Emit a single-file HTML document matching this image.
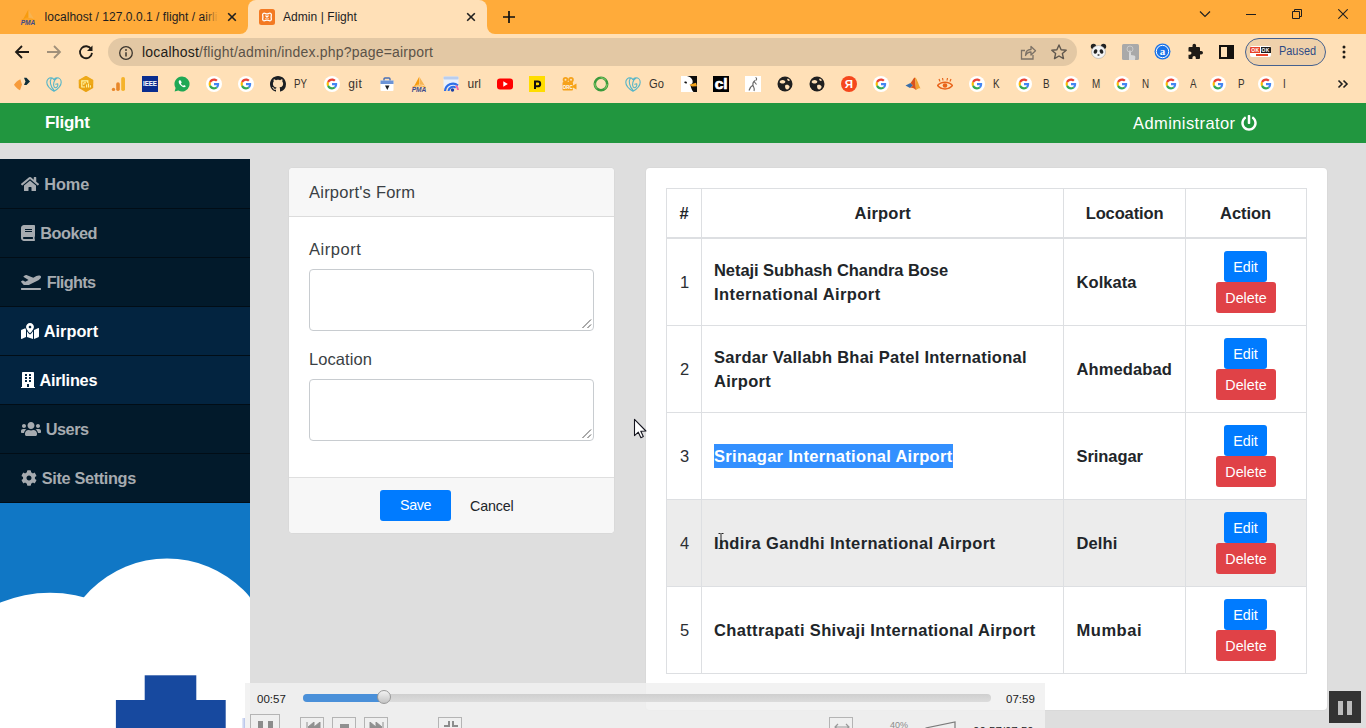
<!DOCTYPE html>
<html lang="en">
<head>
<meta charset="utf-8">
<title>Admin | Flight</title>
<style>
*{box-sizing:border-box;margin:0;padding:0}
html,body{width:1366px;height:728px;overflow:hidden}
body{position:relative;background:#dedede;font-family:"Liberation Sans",sans-serif;font-size:16px;color:#212529;line-height:1.5}
.abs{position:absolute}
/* ---------- browser chrome ---------- */
#tabstrip{position:absolute;left:0;top:0;width:1366px;height:34px;background:#ffab3a}
#toolbar{position:absolute;left:0;top:34px;width:1366px;height:34px;background:#ffe0b7}
#bookmarks{position:absolute;left:0;top:68px;width:1366px;height:35px;background:#ffe0b7}
.tabtxt{position:absolute;top:8px;font-size:12px;line-height:18px;color:#1d1d1f;white-space:nowrap;letter-spacing:0.06px}
#activetab{position:absolute;left:248px;top:0;width:239px;height:34px;background:#ffe0b7;border-radius:8px 8px 0 0}
#omni{position:absolute;left:108px;top:4px;width:969px;height:28px;border-radius:14px;background:#e3c8a4}
#url{position:absolute;left:34px;top:4px;font-size:14px;letter-spacing:0.2px;line-height:20px;color:#5b5348;white-space:nowrap}
#url b{font-weight:normal;color:#1f1c18}
.bm{position:absolute;top:8px;width:16px;height:16px}
.bmt{position:absolute;top:7px;font-size:12px;line-height:18px;color:#38332d;white-space:nowrap}
/* ---------- page ---------- */
#navbar{position:absolute;left:0;top:103px;width:1366px;height:40px;background:#21963f}
#brand{position:absolute;left:45px;top:8px;font-weight:bold;font-size:17px;line-height:24px;color:#fff;letter-spacing:0.15px}
#admin{position:absolute;left:1133px;top:8px;font-size:16.5px;line-height:24px;color:#fff;white-space:nowrap;letter-spacing:0.2px}
#sidebar{position:absolute;left:0;top:159px;width:250px;height:344px;background:#021a2b;overflow:hidden}
.sitem{position:absolute;left:0;width:250px;height:49px;border-bottom:1px solid #010d16;color:#a6abb0;font-weight:bold;font-size:16.3px;line-height:24px;white-space:nowrap}
.sitem.act{background:#032440;color:#fff}
.sitem span{position:absolute;top:12px}
.sitem svg{position:absolute;fill:currentColor}
#sideimg{position:absolute;left:0;top:503px;width:250px;height:225px;background:#1077c5;overflow:hidden}

/* cards */
.card{position:absolute;background:#fff;border-radius:4px;box-shadow:0 0 0 1px rgba(0,0,0,0.02)}
.card-h{position:absolute;left:0;top:0;right:0;height:49px;background:#f7f7f7;border-bottom:1px solid #dcdcdc;border-radius:4px 4px 0 0}
.card-f{position:absolute;left:0;bottom:0;right:0;height:56px;background:#f7f7f7;border-top:1px solid #dfdfdf;border-radius:0 0 4px 4px}
.lbl{position:absolute;left:19px;font-size:16px;line-height:24px;color:#3a3f44;white-space:nowrap}
.ta{position:absolute;width:285px;height:62px;border:1px solid #c8ccd0;border-radius:4px;background:#fff}
.ta svg{position:absolute;right:1px;bottom:1px}
.btn{position:absolute;height:31px;border-radius:3px;color:#fff;font-size:14px;line-height:31px;text-align:center;white-space:nowrap}
.b-blue{background:#007bff}
.b-red{background:#e04247}
/* table */
#tbl{position:absolute;left:20px;top:20px;width:640px;height:486px;border:1px solid #dddfe2}
.vl{position:absolute;top:0;width:1px;height:484px;background:#dddfe2}
.hl{position:absolute;left:0;width:638px;height:1px;background:#dddfe2}
.cell{position:absolute;white-space:nowrap;font-size:16px;line-height:24px;color:#212529}
.cell.b{font-weight:bold}

#vlc{position:absolute;left:245px;top:683px;width:800px;height:45px;background:rgba(240,240,240,0.86);overflow:hidden}
.vt{font-size:11.500px;line-height:16px;color:#1c1c1c;white-space:nowrap}
.vb{border:1px solid #b4b4b4;background:#efefef}
</style>
</head>
<body>
<div id="tabstrip">
<svg class="abs" style="left:20px;top:9px" width="16" height="16" viewBox="0 0 16 16"><path d="M8.300 0.500L3 10.500C5 9 7 8.500 8.300 8.800Z" fill="#f89c0e"/><path d="M8.800 1.500L14 10C12.500 8.800 10.500 8.500 8.800 8.800Z" fill="#f6b453"/><path d="M1 11.500C4 9.300 11 9.300 15 11.500" fill="none" stroke="#f89c0e" stroke-width="0.800"/><text x="8" y="15.600" font-family="Liberation Sans, sans-serif" font-size="6.600" font-weight="bold" font-style="italic" fill="#3c4a8a" text-anchor="middle">PMA</text></svg>
<div class="tabtxt" id="tab1" style="left:44.500px;width:173px;overflow:hidden;letter-spacing:0.04px">localhost / 127.0.0.1 / flight / airline<span class="abs" style="right:0;top:0;width:13px;height:18px;background:linear-gradient(90deg,rgba(255,171,58,0),#ffab3a)"></span></div>
<svg class="abs" style="left:226px;top:11px" width="12" height="12" viewBox="0 0 12 12"><path d="M2.2 2.2L9.8 9.8M9.8 2.2L2.2 9.8" stroke="#1f1f1f" stroke-width="1.6"/></svg>
<div class="abs" style="left:240px;top:26px;width:8px;height:8px;background:#ffe0b7"></div><div class="abs" style="left:240px;top:26px;width:8px;height:8px;border-radius:0 0 8px 0;background:#ffab3a"></div>
<div class="abs" style="left:487px;top:26px;width:8px;height:8px;background:#ffe0b7"></div><div class="abs" style="left:487px;top:26px;width:8px;height:8px;border-radius:0 0 0 8px;background:#ffab3a"></div>
<div id="activetab"></div>
<svg class="abs" style="left:259px;top:9px" width="16" height="16" viewBox="0 0 16 16"><rect width="16" height="16" rx="2.500" fill="#f37a23"/><path d="M4.200 4.500c1.300-.9 2.500.4 3.800.4s2.500-1.300 3.800-.4c1.200.9.300 2.300.3 3.500s.9 2.600-.3 3.500c-1.300.9-2.500-.4-3.800-.4s-2.500 1.300-3.800.4c-1.200-.9-.3-2.300-.3-3.500s-.9-2.600.3-3.500z" fill="none" stroke="#fff" stroke-width="1.300"/><path d="M6.500 6.500L9.500 9.500M9.500 6.500L6.500 9.500" stroke="#fff" stroke-width="1.200"/></svg>
<div class="tabtxt" id="tab2" style="left:283px">Admin | Flight</div>
<svg class="abs" style="left:465px;top:11px" width="12" height="12" viewBox="0 0 12 12"><path d="M2.2 2.2L9.8 9.8M9.8 2.2L2.2 9.8" stroke="#1f1f1f" stroke-width="1.6"/></svg>
<svg class="abs" style="left:502px;top:10px" width="14" height="14" viewBox="0 0 14 14"><path d="M7 1V13M1 7H13" stroke="#111" stroke-width="1.700"/></svg>
<svg class="abs" style="left:1199px;top:10px" width="12" height="8" viewBox="0 0 12 8"><path d="M1 1.500L6 6.500L11 1.500" fill="none" stroke="#1f1f1f" stroke-width="1.200"/></svg>
<div class="abs" style="left:1246px;top:14px;width:10px;height:1px;background:#1f1f1f"></div>
<svg class="abs" style="left:1292px;top:9px" width="10" height="10" viewBox="0 0 10 10"><path d="M0.500 2.500h7v7h-7zM2.500 2.500V0.500h7v7H7.500" fill="none" stroke="#1f1f1f" stroke-width="1"/></svg>
<svg class="abs" style="left:1338px;top:9px" width="10" height="10" viewBox="0 0 10 10"><path d="M0.300 0.300L9.700 9.700M9.700 0.300L0.300 9.700" stroke="#1f1f1f" stroke-width="1.100"/></svg>
</div>
<div id="toolbar">
<svg class="abs" style="left:14px;top:10px" width="16" height="16" viewBox="0 0 16 16"><path d="M15 8H2.500M8 2L2 8L8 14" fill="none" stroke="#1f1b16" stroke-width="1.800"/></svg>
<svg class="abs" style="left:46px;top:10px" width="16" height="16" viewBox="0 0 16 16"><path d="M1 8H13.500M8 2L14 8L8 14" fill="none" stroke="#a0907a" stroke-width="1.800"/></svg>
<svg class="abs" style="left:78px;top:10px" width="16" height="16" viewBox="0 0 16 16"><path d="M13.200 5.200A6 6 0 1 0 14 8.800" fill="none" stroke="#1f1b16" stroke-width="1.800"/><path d="M14.500 1.500V7H9Z" fill="#1f1b16"/></svg>
<div id="omni">
<svg class="abs" style="left:9.700px;top:6.500px" width="16" height="16" viewBox="0 0 16 16"><circle cx="8" cy="8" r="6.300" fill="none" stroke="#3b352d" stroke-width="1.300"/><path d="M8 7.200V11.500" stroke="#3b352d" stroke-width="1.500"/><circle cx="8" cy="5" r=".95" fill="#3b352d"/></svg>
<div id="url"><b>localhost</b>/flight/admin/index.php?page=airport</div>
<svg class="abs" style="left:911px;top:5px" width="18" height="18" viewBox="0 0 18 18"><path d="M6 7.500H2.500V16H14V12" fill="none" stroke="#7c7266" stroke-width="1.300"/><path d="M6.500 12.500C6.500 8.500 9 6.500 12 6.500V3.500L16.500 7.800L12 12V9C10 9 8 9.500 6.500 12.500Z" fill="none" stroke="#7c7266" stroke-width="1.300" stroke-linejoin="round"/></svg>
<svg class="abs" style="left:942px;top:5px" width="18" height="18" viewBox="0 0 18 18"><path d="M9 2l2.100 4.700 5.100.5-3.800 3.400 1.100 5L9 13l-4.500 2.600 1.100-5L1.800 7.200l5.100-.5z" fill="none" stroke="#5f574d" stroke-width="1.400" stroke-linejoin="round"/></svg>
</div>
<svg class="abs" style="left:1090px;top:9px" width="17" height="17" viewBox="0 0 17 17"><circle cx="3.500" cy="3.500" r="2.700" fill="#222"/><circle cx="13.500" cy="3.500" r="2.700" fill="#222"/><ellipse cx="8.500" cy="9" rx="7" ry="6.500" fill="#f4f4f4" stroke="#999" stroke-width=".5"/><ellipse cx="5.500" cy="8.500" rx="1.800" ry="2.300" fill="#222" transform="rotate(20 5.500 8.500)"/><ellipse cx="11.500" cy="8.500" rx="1.800" ry="2.300" fill="#222" transform="rotate(-20 11.500 8.500)"/><ellipse cx="8.500" cy="12" rx="1.200" ry=".8" fill="#222"/></svg>
<svg class="abs" style="left:1122px;top:10px" width="17" height="16" viewBox="0 0 17 16"><rect width="17" height="16" rx="1.500" fill="#a9a9a9"/><path d="M7 16V7.500c0-1.500 2-1.500 2 0V11l3 .5c1 .2 1.500 1 1.300 2L13 16Z" fill="#d9d9d9"/><circle cx="8" cy="5" r="3" fill="none" stroke="#c9c9c9" stroke-width="1"/></svg>
<svg class="abs" style="left:1154px;top:9px" width="17" height="17" viewBox="0 0 17 17"><circle cx="8.500" cy="8.500" r="8" fill="#1a73e8"/><circle cx="8.500" cy="8.500" r="6.200" fill="none" stroke="#fff" stroke-width="1"/><text x="8.500" y="12.300" font-family="Liberation Serif, serif" font-size="11" font-weight="bold" fill="#fff" text-anchor="middle">a</text></svg>
<svg class="abs" style="left:1186px;top:9px" width="17" height="17" viewBox="0 0 17 17"><path d="M6.500 2.500a1.800 1.800 0 0 1 3.600 0V4H13a1 1 0 0 1 1 1v3h1.200a1.800 1.800 0 0 1 0 3.600H14V15a1 1 0 0 1-1 1H9.800v-1.300a1.700 1.700 0 0 0-3.400 0V16H3.500a1 1 0 0 1-1-1v-3.200h1.300a1.700 1.700 0 0 0 0-3.400H2.500V5a1 1 0 0 1 1-1h3z" fill="#1f1b16"/></svg>
<svg class="abs" style="left:1219px;top:11px" width="15" height="14" viewBox="0 0 15 14"><rect x="1" y="1" width="13" height="12" fill="none" stroke="#14110e" stroke-width="2"/><rect x="8" y="1" width="6" height="12" fill="#14110e"/></svg>
<div class="abs" style="left:1245px;top:4px;width:81px;height:28px;border-radius:14px;border:1px solid #44608f;background:#efd1ab"></div>
<div class="abs" style="left:1250px;top:12px;width:21px;height:11px;background:#fff;border-radius:2px;overflow:hidden"><span class="abs" style="left:0;top:1px;width:10px;height:6px;background:#e8432a"></span><span class="abs" style="left:11px;top:1px;width:10px;height:6px;background:#1b1b1b"></span><span class="abs" style="left:6px;top:8px;width:12px;height:2px;background:#e8432a"></span><span class="abs" style="left:0;top:0;width:21px;font-size:5px;line-height:8px;font-weight:bold;color:#fff;letter-spacing:.4px;text-align:center">OK OK</span></div>
<div class="abs" id="paused" style="left:1278.7px;top:8px;font-size:12px;line-height:18px;color:#2d4a85;transform:scaleX(.91);transform-origin:0 50%">Paused</div>
<svg class="abs" style="left:1340px;top:10px" width="8" height="16" viewBox="0 0 8 16"><circle cx="4" cy="3" r="1.500" fill="#1f1b16"/><circle cx="4" cy="8" r="1.500" fill="#1f1b16"/><circle cx="4" cy="13" r="1.500" fill="#1f1b16"/></svg>
</div>
<div id="bookmarks">
<svg class="bm" style="left:14px" viewBox="0 0 16 16"><path d="M0 8.7C1.5 6.5 4 4.2 6.3 3.2L8 8.5L6 14.2C3.5 13 1.2 10.8 0 8.700Z" fill="#f79b3a"/><path d="M10 1.7H12.5L16 5.5L12.5 9H10L11.5 5.500Z" fill="#0f2f3a"/></svg>
<svg class="bm" style="left:46px" viewBox="0 0 16 16"><path d="M8 15.2C3 12.3 0.800 9.300 0.800 6.200C0.800 3.600 2.700 1.800 5 1.800C6.500 1.800 7.500 2.700 8 3.800C8.500 2.700 9.500 1.800 11 1.800C13.300 1.800 15.200 3.600 15.200 6.200C15.200 9.300 13 12.300 8 15.200Z M5.300 2.200C3.400 5 4.300 10.500 8 14.200 M10.700 2.200C8 3.800 6.700 8 8.300 11.200C10 12.600 12.300 10.800 11.800 7.800L9.700 8.200" fill="none" stroke="#55b5c8" stroke-width="1.100" stroke-linecap="round" stroke-linejoin="round"/></svg>
<svg class="bm" style="left:78px" viewBox="0 0 16 16"><path d="M8 -0.2L15.2 3.900V12.100L8 16.200L0.800 12.100V3.900Z" fill="#eaa212"/><path d="M8 -0.2L15.2 3.900V8L0.800 8V3.900Z" fill="#f0ad1c" opacity=".6"/><path d="M9.8 7V4.800H3.800V11H7" fill="none" stroke="#fff3a0" stroke-width="1.200"/><path d="M5.800 9V6.800H8" fill="none" stroke="#fff3a0" stroke-width="1"/><path d="M8.600 11.600V8.600M10.500 11.600V7.600M12.400 11.600V9.300" stroke="#fff3a0" stroke-width="1.100"/></svg>
<svg class="bm" style="left:110px" viewBox="0 0 16 16"><rect x="11.200" y="1" width="3.800" height="14" rx="1.800" fill="#f5b32a"/><rect x="6.200" y="6.300" width="3.600" height="8.700" rx="1.800" fill="#e8872a"/><circle cx="3.500" cy="13.400" r="1.700" fill="#e8872a"/></svg>
<svg class="bm" style="left:142px" viewBox="0 0 16 16"><rect width="16" height="16" fill="#0a2d8f"/><text x="8" y="10.400" font-family="Liberation Sans, sans-serif" font-size="6.300" font-weight="bold" fill="#fff" text-anchor="middle" letter-spacing="-0.100">IEEE</text></svg>
<svg class="bm" style="left:174px" viewBox="0 0 16 16"><path d="M8 0.500a7.500 7.500 0 0 0-6.400 11.400L0.600 15.500l3.700-1A7.500 7.500 0 1 0 8 0.500z" fill="#1fa855"/><path d="M5.600 4.300c-.3 0-.9.500-.9 1.500 0 2 2.700 5 5.300 5.400.900.100 1.700-.500 1.800-1.200l-1.700-1-.8.800c-1-.400-2-1.400-2.400-2.400l.8-.8-.9-2.100z" fill="#fff"/></svg>
<svg class="bm" style="left:206px" viewBox="0 0 16 16"><circle cx="8" cy="8" r="8" fill="#fff"/><g transform="translate(2.6 2.6) scale(0.225)"><path fill="#EA4335" d="M24 9.5c3.54 0 6.71 1.22 9.21 3.6l6.85-6.85C35.9 2.38 30.47 0 24 0 14.62 0 6.51 5.38 2.56 13.22l7.98 6.19C12.43 13.72 17.74 9.5 24 9.5z"/><path fill="#4285F4" d="M46.98 24.55c0-1.57-.15-3.09-.38-4.55H24v9.02h12.94c-.58 2.96-2.26 5.48-4.78 7.18l7.73 6c4.51-4.18 7.09-10.36 7.09-17.65z"/><path fill="#FBBC05" d="M10.53 28.59c-.48-1.45-.76-2.99-.76-4.59s.27-3.14.76-4.59l-7.98-6.19C.92 16.46 0 20.12 0 24c0 3.88.92 7.54 2.56 10.78l7.97-6.19z"/><path fill="#34A853" d="M24 48c6.48 0 11.93-2.13 16.15-5.81l-7.73-6c-2.15 1.45-4.92 2.3-8.42 2.3-6.26 0-11.57-4.22-13.47-9.91l-7.98 6.19C6.51 42.62 14.62 48 24 48z"/></g></svg>
<svg class="bm" style="left:238px" viewBox="0 0 16 16"><circle cx="8" cy="8" r="8" fill="#fff"/><g transform="translate(2.6 2.6) scale(0.225)"><path fill="#EA4335" d="M24 9.5c3.54 0 6.71 1.22 9.21 3.6l6.85-6.85C35.9 2.38 30.47 0 24 0 14.62 0 6.51 5.38 2.56 13.22l7.98 6.19C12.43 13.72 17.74 9.5 24 9.5z"/><path fill="#4285F4" d="M46.98 24.55c0-1.57-.15-3.09-.38-4.55H24v9.02h12.94c-.58 2.96-2.26 5.48-4.78 7.18l7.73 6c4.51-4.18 7.09-10.36 7.09-17.65z"/><path fill="#FBBC05" d="M10.53 28.59c-.48-1.45-.76-2.99-.76-4.59s.27-3.14.76-4.59l-7.98-6.19C.92 16.46 0 20.12 0 24c0 3.88.92 7.54 2.56 10.78l7.97-6.19z"/><path fill="#34A853" d="M24 48c6.48 0 11.93-2.13 16.15-5.81l-7.73-6c-2.15 1.45-4.92 2.3-8.42 2.3-6.26 0-11.57-4.22-13.47-9.91l-7.98 6.19C6.51 42.62 14.62 48 24 48z"/></g></svg>
<svg class="bm" style="left:270px" viewBox="0 0 16 16"><path fill="#1b1f23" d="M8 0C3.580 0 0 3.580 0 8c0 3.540 2.290 6.530 5.470 7.590.4.070.55-.17.55-.38 0-.19-.01-.82-.01-1.490-2.010.37-2.530-.49-2.690-.94-.09-.23-.48-.94-.82-1.130-.28-.15-.68-.52-.01-.53.63-.01 1.080.58 1.230.82.72 1.210 1.870.87 2.330.66.070-.52.280-.87.510-1.070-1.780-.2-3.640-.89-3.640-3.950 0-.87.310-1.590.82-2.150-.08-.2-.36-1.020.08-2.120 0 0 .67-.21 2.200.82.640-.18 1.320-.27 2-.27.680 0 1.360.09 2 .27 1.530-1.040 2.200-.82 2.200-.82.440 1.100.16 1.920.08 2.120.51.560.82 1.270.82 2.150 0 3.070-1.870 3.750-3.650 3.950.29.250.54.730.54 1.480 0 1.070-.01 1.930-.01 2.200 0 .21.15.46.55.38A8.013 8.013 0 0016 8c0-4.420-3.580-8-8-8z"/></svg>
<span class="bmt" style="left:294.4px;transform:scaleX(.81);transform-origin:0 50%">PY</span>
<svg class="bm" style="left:324px" viewBox="0 0 16 16"><circle cx="8" cy="8" r="8" fill="#fff"/><g transform="translate(2.6 2.6) scale(0.225)"><path fill="#EA4335" d="M24 9.5c3.54 0 6.71 1.22 9.21 3.6l6.85-6.85C35.9 2.38 30.47 0 24 0 14.62 0 6.51 5.38 2.56 13.22l7.98 6.19C12.43 13.72 17.74 9.5 24 9.5z"/><path fill="#4285F4" d="M46.98 24.55c0-1.57-.15-3.09-.38-4.55H24v9.02h12.94c-.58 2.96-2.26 5.48-4.78 7.18l7.73 6c4.51-4.18 7.09-10.36 7.09-17.65z"/><path fill="#FBBC05" d="M10.53 28.59c-.48-1.45-.76-2.99-.76-4.59s.27-3.14.76-4.59l-7.98-6.19C.92 16.46 0 20.12 0 24c0 3.88.92 7.54 2.56 10.78l7.97-6.19z"/><path fill="#34A853" d="M24 48c6.48 0 11.93-2.13 16.15-5.81l-7.73-6c-2.15 1.45-4.92 2.3-8.42 2.3-6.26 0-11.57-4.22-13.47-9.91l-7.98 6.19C6.51 42.62 14.62 48 24 48z"/></g></svg>
<span class="bmt" style="left:348.2px;letter-spacing:.5px">git</span>
<svg class="bm" style="left:379px" viewBox="0 0 16 16"><rect x="1.500" y="4.500" width="13" height="10.500" rx="1" fill="#fff"/><path d="M5 4.500V3a1 1 0 0 1 1-1h4a1 1 0 0 1 1 1v1.500" fill="none" stroke="#4a6fb5" stroke-width="1.400"/><rect x="1.500" y="4.500" width="13" height="3.500" fill="#6b93d6"/><path d="M6 9.500h4.500l-2.200 4.500z" fill="#1b1f23"/></svg>
<svg class="bm" style="left:411px" viewBox="0 0 16 16"><path d="M8.300 0.500L3 10.500C5 9 7 8.500 8.300 8.800Z" fill="#f89c0e"/><path d="M8.800 1.500L14 10C12.500 8.800 10.500 8.500 8.800 8.800Z" fill="#f6b453"/><path d="M1 11.500C4 9.300 11 9.300 15 11.500" fill="none" stroke="#f89c0e" stroke-width="0.800"/><text x="8" y="15.600" font-family="Liberation Sans, sans-serif" font-size="6.600" font-weight="bold" font-style="italic" fill="#3c4a8a" text-anchor="middle">PMA</text></svg>
<svg class="bm" style="left:443px" viewBox="0 0 16 16"><rect x="0.500" y="0.500" width="15" height="12" rx="1" fill="#eaf1fb"/><rect x="0.500" y="0.500" width="15" height="3" rx="1" fill="#b9cdee"/><path d="M2 15a8 8 0 0 1 13-5.500" fill="none" stroke="#2f6fe8" stroke-width="2.200"/><path d="M5.500 15a4.500 4.500 0 0 1 7.200-3.200" fill="none" stroke="#2f6fe8" stroke-width="2"/><circle cx="9.500" cy="14" r="1.700" fill="#1d3fa6"/><path d="M13 9.500a8 8 0 0 1 2 4.500" stroke="#f06aa0" stroke-width="2" fill="none"/></svg>
<span class="bmt" style="left:467.500px">url</span>
<svg class="bm" style="left:497px" viewBox="0 0 16 16"><rect x="0" y="2.500" width="16" height="11" rx="3" fill="#f00"/><path d="M6.300 5.300L10.800 8L6.300 10.700Z" fill="#fff"/></svg>
<svg class="bm" style="left:529px" viewBox="0 0 16 16"><rect width="16" height="16" fill="#ffdd00"/><path d="M6 13V5.500h2.800a2.400 2.400 0 0 1 0 4.800H6" fill="none" stroke="#111" stroke-width="2"/></svg>
<svg class="bm" style="left:561px" viewBox="0 0 16 16"><circle cx="4.500" cy="3.800" r="2.800" fill="#f6a21a"/><circle cx="10" cy="3.800" r="2.800" fill="#f6a21a"/><rect x="1.500" y="6" width="10.500" height="8.500" rx="1" fill="#f6a21a"/><path d="M12 9.500L15.500 7.500V13.500L12 11.500Z" fill="#f6a21a"/><circle cx="4.500" cy="3.800" r="1" fill="#ffe0b7"/><circle cx="10" cy="3.800" r="1" fill="#ffe0b7"/><text x="6.800" y="13" font-family="Liberation Sans, sans-serif" font-size="4.500" font-weight="bold" fill="#fff" text-anchor="middle">ORC</text></svg>
<svg class="bm" style="left:593px" viewBox="0 0 16 16"><circle cx="8" cy="8" r="6.200" fill="none" stroke="#3a9a3c" stroke-width="2.600"/><circle cx="8" cy="8" r="6.200" fill="none" stroke="#8fce6a" stroke-width="1" stroke-dasharray="6 8"/></svg>
<svg class="bm" style="left:625px" viewBox="0 0 16 16"><path d="M8 15.2C3 12.3 0.800 9.300 0.800 6.200C0.800 3.600 2.700 1.800 5 1.800C6.500 1.800 7.500 2.700 8 3.800C8.500 2.700 9.500 1.800 11 1.800C13.300 1.800 15.200 3.600 15.200 6.200C15.200 9.300 13 12.300 8 15.200Z M5.300 2.200C3.400 5 4.300 10.500 8 14.200 M10.700 2.200C8 3.800 6.700 8 8.300 11.200C10 12.600 12.300 10.800 11.800 7.800L9.700 8.200" fill="none" stroke="#55b5c8" stroke-width="1.100" stroke-linecap="round" stroke-linejoin="round"/></svg>
<span class="bmt" style="left:649.4px;transform:scaleX(.93);transform-origin:0 50%">Go</span>
<svg class="bm" style="left:681px" viewBox="0 0 16 16"><rect width="16" height="16" fill="#0c0c0c"/><path d="M0 0H6C10 1 12.500 4 11.500 7L9.500 9C10 12 11 14.500 12.500 16H0Z" fill="#fff"/><path d="M8.300 8.800L15 6.800L16 10.200L11 10.400Z" fill="#f2a21c"/><ellipse cx="4.600" cy="6.400" rx="1.400" ry=".9" fill="#111" transform="rotate(20 4.600 6.400)"/></svg>
<svg class="bm" style="left:713px" viewBox="0 0 16 16"><rect width="16" height="16" fill="#000"/><text x="8" y="13.400" font-family="Liberation Sans, sans-serif" font-size="15.500" font-weight="bold" fill="#fff" stroke="#fff" stroke-width=".700" text-anchor="middle" letter-spacing="-0.300">cl</text></svg>
<svg class="bm" style="left:745px" viewBox="0 0 16 16"><rect width="16" height="16" fill="#fff"/><path d="M10.500 1.500c1.500.5 1.500 2.500 0 3M10 4.500c-1.500 1-2.500 3-2 5s2 2.500 1 5.500M8 9c-2 1-3 3-4 5.500M9.500 6l2 2.500" fill="none" stroke="#666" stroke-width="1.100"/></svg>
<svg class="bm" style="left:777px" viewBox="0 0 16 16"><circle cx="8" cy="8" r="7.500" fill="#1f1f1f"/><path d="M3.500 4.500c2-1 3.500-.5 4.500.5s-.5 2.500-2 2.500-3-.5-3.500-1.500zM8.500 9c1.500-.800 3.500 0 4 1.200s-1 3.300-2.500 3.300-2.500-3-1.500-4.500zM10 3c1-.5 2.500.300 3 1.500l-2 .5z" fill="#ffe0b7"/></svg>
<svg class="bm" style="left:809px" viewBox="0 0 16 16"><circle cx="8" cy="8" r="7.500" fill="#1f1f1f"/><path d="M3.500 4.500c2-1 3.500-.5 4.500.5s-.5 2.500-2 2.500-3-.5-3.500-1.500zM8.500 9c1.500-.800 3.500 0 4 1.200s-1 3.300-2.500 3.300-2.500-3-1.500-4.500zM10 3c1-.5 2.500.300 3 1.500l-2 .5z" fill="#ffe0b7"/></svg>
<svg class="bm" style="left:841px" viewBox="0 0 16 16"><circle cx="8" cy="8" r="8" fill="#f5471d"/><text x="8" y="12.300" font-family="Liberation Sans, sans-serif" font-size="11.500" font-weight="bold" fill="#fff" text-anchor="middle">Я</text></svg>
<svg class="bm" style="left:873px" viewBox="0 0 16 16"><circle cx="8" cy="8" r="8" fill="#fff"/><g transform="translate(2.6 2.6) scale(0.225)"><path fill="#EA4335" d="M24 9.5c3.54 0 6.71 1.22 9.21 3.6l6.85-6.85C35.9 2.38 30.47 0 24 0 14.62 0 6.51 5.38 2.56 13.22l7.98 6.19C12.43 13.72 17.74 9.5 24 9.5z"/><path fill="#4285F4" d="M46.98 24.55c0-1.57-.15-3.09-.38-4.55H24v9.02h12.94c-.58 2.96-2.26 5.48-4.78 7.18l7.73 6c4.51-4.18 7.09-10.36 7.09-17.65z"/><path fill="#FBBC05" d="M10.53 28.59c-.48-1.45-.76-2.99-.76-4.59s.27-3.14.76-4.59l-7.98-6.19C.92 16.46 0 20.12 0 24c0 3.88.92 7.54 2.56 10.78l7.97-6.19z"/><path fill="#34A853" d="M24 48c6.48 0 11.93-2.13 16.15-5.81l-7.73-6c-2.15 1.45-4.92 2.3-8.42 2.3-6.26 0-11.57-4.22-13.47-9.91l-7.98 6.19C6.51 42.62 14.62 48 24 48z"/></g></svg>
<svg class="bm" style="left:905px" viewBox="0 0 16 16"><path d="M0.500 9.500L5.500 7L8 9.500L5 12Z" fill="#3a6ea8"/><path d="M5.500 7C7.500 5 8.500 1.500 10 1.500L11 14C9.500 13 8 11 5 12L8 9.500Z" fill="#d9541e"/><path d="M10 1.500C11.500 1.500 13 7 15.500 12.500C13.500 11.500 12.500 13 11 14Z" fill="#f0a030"/></svg>
<svg class="bm" style="left:937px" viewBox="0 0 16 16"><path d="M0.500 9.500C4 5 12 5 15.500 9.500C12 14 4 14 0.500 9.500Z" fill="none" stroke="#e8641b" stroke-width="1.500"/><circle cx="8" cy="9.500" r="2.300" fill="#e8641b"/><path d="M3 5.500L2 3M6 4.500L5.500 2M10 4.500L10.500 2M13 5.500L14 3" stroke="#e8641b" stroke-width="1.200"/></svg>
<svg class="bm" style="left:969px" viewBox="0 0 16 16"><circle cx="8" cy="8" r="8" fill="#fff"/><g transform="translate(2.6 2.6) scale(0.225)"><path fill="#EA4335" d="M24 9.5c3.54 0 6.71 1.22 9.21 3.6l6.85-6.85C35.9 2.38 30.47 0 24 0 14.62 0 6.51 5.38 2.56 13.22l7.98 6.19C12.43 13.72 17.74 9.5 24 9.5z"/><path fill="#4285F4" d="M46.98 24.55c0-1.57-.15-3.09-.38-4.55H24v9.02h12.94c-.58 2.96-2.26 5.48-4.78 7.18l7.73 6c4.51-4.18 7.09-10.36 7.09-17.65z"/><path fill="#FBBC05" d="M10.53 28.59c-.48-1.45-.76-2.99-.76-4.59s.27-3.14.76-4.59l-7.98-6.19C.92 16.46 0 20.12 0 24c0 3.88.92 7.54 2.56 10.78l7.97-6.19z"/><path fill="#34A853" d="M24 48c6.48 0 11.93-2.13 16.15-5.81l-7.73-6c-2.15 1.45-4.92 2.3-8.42 2.3-6.26 0-11.57-4.22-13.47-9.91l-7.98 6.19C6.51 42.62 14.62 48 24 48z"/></g></svg>
<span class="bmt" style="left:993.4px;transform:scaleX(.82);transform-origin:0 50%">K</span>
<svg class="bm" style="left:1016px" viewBox="0 0 16 16"><circle cx="8" cy="8" r="8" fill="#fff"/><g transform="translate(2.6 2.6) scale(0.225)"><path fill="#EA4335" d="M24 9.5c3.54 0 6.71 1.22 9.21 3.6l6.85-6.85C35.9 2.38 30.47 0 24 0 14.62 0 6.51 5.38 2.56 13.22l7.98 6.19C12.43 13.72 17.74 9.5 24 9.5z"/><path fill="#4285F4" d="M46.98 24.55c0-1.57-.15-3.09-.38-4.55H24v9.02h12.94c-.58 2.96-2.26 5.48-4.78 7.18l7.73 6c4.51-4.18 7.09-10.36 7.09-17.65z"/><path fill="#FBBC05" d="M10.53 28.59c-.48-1.45-.76-2.99-.76-4.59s.27-3.14.76-4.59l-7.98-6.19C.92 16.46 0 20.12 0 24c0 3.88.92 7.54 2.56 10.78l7.97-6.19z"/><path fill="#34A853" d="M24 48c6.48 0 11.93-2.13 16.15-5.81l-7.73-6c-2.15 1.45-4.92 2.3-8.42 2.3-6.26 0-11.57-4.22-13.47-9.91l-7.98 6.19C6.51 42.62 14.62 48 24 48z"/></g></svg>
<span class="bmt" style="left:1043.4px;transform:scaleX(.82);transform-origin:0 50%">B</span>
<svg class="bm" style="left:1063px" viewBox="0 0 16 16"><circle cx="8" cy="8" r="8" fill="#fff"/><g transform="translate(2.6 2.6) scale(0.225)"><path fill="#EA4335" d="M24 9.5c3.54 0 6.71 1.22 9.21 3.6l6.85-6.85C35.9 2.38 30.47 0 24 0 14.62 0 6.51 5.38 2.56 13.22l7.98 6.19C12.43 13.72 17.74 9.5 24 9.5z"/><path fill="#4285F4" d="M46.98 24.55c0-1.57-.15-3.09-.38-4.55H24v9.02h12.94c-.58 2.96-2.26 5.48-4.78 7.18l7.73 6c4.51-4.18 7.09-10.36 7.09-17.65z"/><path fill="#FBBC05" d="M10.53 28.59c-.48-1.45-.76-2.99-.76-4.59s.27-3.14.76-4.59l-7.98-6.19C.92 16.46 0 20.12 0 24c0 3.88.92 7.54 2.56 10.78l7.97-6.19z"/><path fill="#34A853" d="M24 48c6.48 0 11.93-2.13 16.15-5.81l-7.73-6c-2.15 1.45-4.92 2.3-8.42 2.3-6.26 0-11.57-4.22-13.47-9.91l-7.98 6.19C6.51 42.62 14.62 48 24 48z"/></g></svg>
<span class="bmt" style="left:1092.4px;transform:scaleX(.82);transform-origin:0 50%">M</span>
<svg class="bm" style="left:1114px" viewBox="0 0 16 16"><circle cx="8" cy="8" r="8" fill="#fff"/><g transform="translate(2.6 2.6) scale(0.225)"><path fill="#EA4335" d="M24 9.5c3.54 0 6.71 1.22 9.21 3.6l6.85-6.85C35.9 2.38 30.47 0 24 0 14.62 0 6.51 5.38 2.56 13.22l7.98 6.19C12.43 13.72 17.74 9.5 24 9.5z"/><path fill="#4285F4" d="M46.98 24.55c0-1.57-.15-3.09-.38-4.55H24v9.02h12.94c-.58 2.96-2.26 5.48-4.78 7.18l7.73 6c4.51-4.18 7.09-10.36 7.09-17.65z"/><path fill="#FBBC05" d="M10.53 28.59c-.48-1.45-.76-2.99-.76-4.59s.27-3.14.76-4.59l-7.98-6.19C.92 16.46 0 20.12 0 24c0 3.88.92 7.54 2.56 10.78l7.97-6.19z"/><path fill="#34A853" d="M24 48c6.48 0 11.93-2.13 16.15-5.81l-7.73-6c-2.15 1.45-4.92 2.3-8.42 2.3-6.26 0-11.57-4.22-13.47-9.91l-7.98 6.19C6.51 42.62 14.62 48 24 48z"/></g></svg>
<span class="bmt" style="left:1142.4px;transform:scaleX(.82);transform-origin:0 50%">N</span>
<svg class="bm" style="left:1163px" viewBox="0 0 16 16"><circle cx="8" cy="8" r="8" fill="#fff"/><g transform="translate(2.6 2.6) scale(0.225)"><path fill="#EA4335" d="M24 9.5c3.54 0 6.71 1.22 9.21 3.6l6.85-6.85C35.9 2.38 30.47 0 24 0 14.62 0 6.51 5.38 2.56 13.22l7.98 6.19C12.43 13.72 17.74 9.5 24 9.5z"/><path fill="#4285F4" d="M46.98 24.55c0-1.57-.15-3.09-.38-4.55H24v9.02h12.94c-.58 2.96-2.26 5.48-4.78 7.18l7.73 6c4.51-4.18 7.09-10.36 7.09-17.65z"/><path fill="#FBBC05" d="M10.53 28.59c-.48-1.45-.76-2.99-.76-4.59s.27-3.14.76-4.59l-7.98-6.19C.92 16.46 0 20.12 0 24c0 3.88.92 7.54 2.56 10.78l7.97-6.19z"/><path fill="#34A853" d="M24 48c6.48 0 11.93-2.13 16.15-5.81l-7.73-6c-2.15 1.45-4.92 2.3-8.42 2.3-6.26 0-11.57-4.22-13.47-9.91l-7.98 6.19C6.51 42.62 14.62 48 24 48z"/></g></svg>
<span class="bmt" style="left:1190.4px;transform:scaleX(.82);transform-origin:0 50%">A</span>
<svg class="bm" style="left:1210px" viewBox="0 0 16 16"><circle cx="8" cy="8" r="8" fill="#fff"/><g transform="translate(2.6 2.6) scale(0.225)"><path fill="#EA4335" d="M24 9.5c3.54 0 6.71 1.22 9.21 3.6l6.85-6.85C35.9 2.38 30.47 0 24 0 14.62 0 6.51 5.38 2.56 13.22l7.98 6.19C12.43 13.72 17.74 9.5 24 9.5z"/><path fill="#4285F4" d="M46.98 24.55c0-1.57-.15-3.09-.38-4.55H24v9.02h12.94c-.58 2.96-2.26 5.48-4.78 7.18l7.73 6c4.51-4.18 7.09-10.36 7.09-17.65z"/><path fill="#FBBC05" d="M10.53 28.59c-.48-1.45-.76-2.99-.76-4.59s.27-3.14.76-4.59l-7.98-6.19C.92 16.46 0 20.12 0 24c0 3.88.92 7.54 2.56 10.78l7.97-6.19z"/><path fill="#34A853" d="M24 48c6.48 0 11.93-2.13 16.15-5.81l-7.73-6c-2.15 1.45-4.92 2.3-8.42 2.3-6.26 0-11.57-4.22-13.47-9.91l-7.98 6.19C6.51 42.62 14.62 48 24 48z"/></g></svg>
<span class="bmt" style="left:1238.4px;transform:scaleX(.82);transform-origin:0 50%">P</span>
<svg class="bm" style="left:1258px" viewBox="0 0 16 16"><circle cx="8" cy="8" r="8" fill="#fff"/><g transform="translate(2.6 2.6) scale(0.225)"><path fill="#EA4335" d="M24 9.5c3.54 0 6.71 1.22 9.21 3.6l6.85-6.85C35.9 2.38 30.47 0 24 0 14.62 0 6.51 5.38 2.56 13.22l7.98 6.19C12.43 13.72 17.74 9.5 24 9.5z"/><path fill="#4285F4" d="M46.98 24.55c0-1.57-.15-3.09-.38-4.55H24v9.02h12.94c-.58 2.96-2.26 5.48-4.78 7.18l7.73 6c4.51-4.18 7.09-10.36 7.09-17.65z"/><path fill="#FBBC05" d="M10.53 28.59c-.48-1.45-.76-2.99-.76-4.59s.27-3.14.76-4.59l-7.98-6.19C.92 16.46 0 20.12 0 24c0 3.88.92 7.54 2.56 10.78l7.97-6.19z"/><path fill="#34A853" d="M24 48c6.48 0 11.93-2.13 16.15-5.81l-7.73-6c-2.15 1.45-4.92 2.3-8.42 2.3-6.26 0-11.57-4.22-13.47-9.91l-7.98 6.19C6.51 42.62 14.62 48 24 48z"/></g></svg>
<span class="bmt" style="left:1283.4px;transform:scaleX(.82);transform-origin:0 50%">I</span>
<svg class="bm" style="left:1335px" viewBox="0 0 16 16"><path d="M3.500 4.500L7 8L3.500 11.500M8.500 4.500L12 8L8.500 11.500" fill="none" stroke="#1f1f1f" stroke-width="1.600"/></svg>
</div>
<div id="navbar"><svg class="abs" id="pwr" style="left:1241px;top:12px;fill:#fff" width="16" height="16" viewBox="0 0 512 512"><path d="M400 54.100c63 45 104 118.600 104 201.900 0 136.800-110.800 247.700-247.500 248C120 504.300 8.200 393 8 256.400 7.900 173.100 48.900 99.300 111.800 54.200c11.700-8.300 28-4.800 35 7.700L162.600 90c5.900 10.500 3.100 23.800-6.600 31-41.500 30.800-68 79.600-68 134.900-.1 92.300 74.500 168.100 168 168.100 91.600 0 168.600-74.200 168-169.100-.3-51.800-24.700-101.800-68.100-134-9.700-7.200-12.400-20.500-6.500-30.900l15.800-28.100c7-12.400 23.200-16.100 34.800-7.800zM296 264V24c0-13.300-10.700-24-24-24h-32c-13.300 0-24 10.700-24 24v240c0 13.300 10.700 24 24 24h32c13.300 0 24-10.700 24-24z"/></svg><div id="brand" style="font-size:17px;letter-spacing:-0.294px;">Flight</div><div id="admin" style="font-size:16.5px;letter-spacing:0.407px;">Administrator</div></div>
<div id="sidebar">
<div class="sitem" style="top:1px"><svg viewBox="0 0 576 512" width="18" height="16" style="left:21px;top:16px"><path d="M280.37 148.26L96 300.11V464a16 16 0 0 0 16 16l112.06-.29a16 16 0 0 0 15.92-16V368a16 16 0 0 1 16-16h64a16 16 0 0 1 16 16v95.64a16 16 0 0 0 16 16.050L464 480a16 16 0 0 0 16-16V300L295.670 148.260a12.190 12.190 0 0 0-15.300 0zM571.600 251.470L488 182.560V44.050a12 12 0 0 0-12-12h-56a12 12 0 0 0-12 12v72.610L318.470 43a48 48 0 0 0-61 0L4.340 251.470a12 12 0 0 0-1.600 16.900l25.500 31A12 12 0 0 0 45.150 301l235.220-193.740a12.190 12.190 0 0 1 15.300 0L530.900 301a12 12 0 0 0 16.900-1.600l25.500-31a12 12 0 0 0-1.700-16.930z"/></svg><span style="left:44.2px;font-size:16.3px;letter-spacing:-0.037px;">Home</span></div>
<div class="sitem" style="top:50px"><svg viewBox="0 0 448 512" width="14" height="16" style="left:21px;top:16px"><path d="M448 360V24c0-13.300-10.700-24-24-24H96C43 0 0 43 0 96v320c0 53 43 96 96 96h328c13.300 0 24-10.700 24-24v-16c0-7.500-3.500-14.300-8.900-18.700-4.200-15.400-4.200-59.300 0-74.700 5.400-4.300 8.900-11.100 8.900-18.600zM128 134c0-3.300 2.700-6 6-6h212c3.300 0 6 2.700 6 6v20c0 3.300-2.700 6-6 6H134c-3.300 0-6-2.700-6-6v-20zm0 64c0-3.300 2.700-6 6-6h212c3.300 0 6 2.700 6 6v20c0 3.300-2.700 6-6 6H134c-3.300 0-6-2.700-6-6v-20zm253.400 250H96c-17.700 0-32-14.300-32-32 0-17.600 14.400-32 32-32h285.400c-1.900 17.100-1.900 46.900 0 64z"/></svg><span style="left:40.2px;font-size:16.3px;letter-spacing:-0.486px;">Booked</span></div>
<div class="sitem" style="top:99px"><svg viewBox="0 0 640 512" width="20" height="16" style="left:21px;top:16px"><path d="M624 448H16c-8.840 0-16 7.160-16 16v32c0 8.840 7.160 16 16 16h608c8.840 0 16-7.160 16-16v-32c0-8.840-7.160-16-16-16zM80.550 341.270c6.280 6.840 15.100 10.720 24.330 10.710l130.540-.18a65.620 65.620 0 0 0 29.640-7.120l290.960-147.650c26.740-13.570 50.710-32.940 67.020-58.310 18.310-28.480 20.300-49.090 13.070-63.650-7.210-14.570-24.740-25.270-58.250-27.450-29.850-1.940-59.540 5.920-86.280 19.480l-98.510 49.990-218.700-82.060a17.799 17.799 0 0 0-18-1.110L90.620 67.290c-10.670 5.410-13.250 19.650-5.170 28.530l156.220 98.100-103.210 52.380-72.350-36.470a17.804 17.804 0 0 0-16.070.02L9.910 230.220c-10.440 5.300-13.190 19.120-5.570 28.080l76.210 82.970z"/></svg><span style="left:46.7px;font-size:16.3px;letter-spacing:-0.651px;">Flights</span></div>
<div class="sitem act" style="top:148px"><svg viewBox="0 0 576 512" width="18" height="16" style="left:21px;top:16px"><path d="M288 0c-69.590 0-126 56.410-126 126 0 56.260 82.350 158.800 113.900 196.020 6.390 7.540 17.820 7.540 24.200 0C331.650 284.800 414 182.260 414 126 414 56.410 357.590 0 288 0zm0 168c-23.200 0-42-18.800-42-42s18.800-42 42-42 42 18.800 42 42-18.800 42-42 42zM20.120 215.950A32.006 32.006 0 0 0 0 245.660v250.320c0 11.320 11.430 19.060 21.940 14.860L160 448V214.920c-8.840-15.980-16.070-31.540-21.250-46.420L20.120 215.950zM288 359.670c-14.070 0-27.380-6.180-36.510-16.960-19.660-23.200-40.570-49.620-59.490-76.720v182l192 64V266c-18.920 27.090-39.820 53.520-59.490 76.720-9.130 10.770-22.440 16.950-36.510 16.950zm266.060-198.510L416 224v288l139.880-55.950A31.996 31.996 0 0 0 576 426.340V176.020c0-11.320-11.430-19.060-21.940-14.860z"/></svg><span style="left:43.7px;font-size:16.3px;letter-spacing:0.033px;">Airport</span></div>
<div class="sitem act" style="top:197px"><svg viewBox="0 0 448 512" width="14" height="16" style="left:21px;top:16px"><path d="M436 480h-20V24c0-13.255-10.745-24-24-24H56C42.745 0 32 10.745 32 24v456H12c-6.627 0-12 5.373-12 12v20h448v-20c0-6.627-5.373-12-12-12zM128 76c0-6.627 5.373-12 12-12h40c6.627 0 12 5.373 12 12v40c0 6.627-5.373 12-12 12h-40c-6.627 0-12-5.373-12-12V76zm0 96c0-6.627 5.373-12 12-12h40c6.627 0 12 5.373 12 12v40c0 6.627-5.373 12-12 12h-40c-6.627 0-12-5.373-12-12v-40zm52 148h-40c-6.627 0-12-5.373-12-12v-40c0-6.627 5.373-12 12-12h40c6.627 0 12 5.373 12 12v40c0 6.627-5.373 12-12 12zm76 160h-64v-84c0-6.627 5.373-12 12-12h40c6.627 0 12 5.373 12 12v84zm64-172c0 6.627-5.373 12-12 12h-40c-6.627 0-12-5.373-12-12v-40c0-6.627 5.373-12 12-12h40c6.627 0 12 5.373 12 12v40zm0-96c0 6.627-5.373 12-12 12h-40c-6.627 0-12-5.373-12-12v-40c0-6.627 5.373-12 12-12h40c6.627 0 12 5.373 12 12v40zm0-96c0 6.627-5.373 12-12 12h-40c-6.627 0-12-5.373-12-12V76c0-6.627 5.373-12 12-12h40c6.627 0 12 5.373 12 12v40z"/></svg><span style="left:39.5px;font-size:16.3px;letter-spacing:-0.254px;">Airlines</span></div>
<div class="sitem" style="top:246px"><svg viewBox="0 0 640 512" width="20" height="16" style="left:21px;top:16px"><path d="M96 224c35.300 0 64-28.700 64-64s-28.700-64-64-64-64 28.700-64 64 28.700 64 64 64zm448 0c35.300 0 64-28.700 64-64s-28.700-64-64-64-64 28.700-64 64 28.700 64 64 64zm32 32h-64c-17.600 0-33.500 7.100-45.100 18.600 40.300 22.100 68.900 62 75.100 109.400h66c17.700 0 32-14.300 32-32v-32c0-35.300-28.700-64-64-64zm-256 0c61.900 0 112-50.100 112-112S381.900 32 320 32 208 82.100 208 144s50.100 112 112 112zm76.800 32h-8.300c-20.800 10-43.900 16-68.500 16s-47.600-6-68.500-16h-8.300C179.600 288 128 339.600 128 403.200V432c0 26.500 21.500 48 48 48h288c26.500 0 48-21.500 48-48v-28.800c0-63.600-51.600-115.200-115.200-115.200zm-223.700-13.400C161.500 263.100 145.600 256 128 256H64c-35.300 0-64 28.700-64 64v32c0 17.700 14.300 32 32 32h65.900c6.300-47.400 34.900-87.300 75.200-109.400z"/></svg><span style="left:45.7px;font-size:16.3px;letter-spacing:-0.473px;">Users</span></div>
<div class="sitem" style="top:295px"><svg viewBox="0 0 512 512" width="16" height="16" style="left:21px;top:16px"><path d="M487.4 315.7l-42.600-24.600c4.300-23.200 4.300-47 0-70.200l42.600-24.600c4.900-2.800 7.100-8.600 5.500-14-11.100-35.600-30-67.800-54.700-94.600-3.800-4.100-10-5.100-14.800-2.300L380.800 110c-17.900-15.400-38.500-27.300-60.800-35.100V25.800c0-5.600-3.900-10.500-9.400-11.700-36.700-8.200-74.300-7.800-109.200 0-5.500 1.200-9.400 6.100-9.400 11.700V75c-22.200 7.900-42.800 19.800-60.800 35.100L88.700 85.500c-4.900-2.800-11-1.900-14.800 2.300-24.700 26.700-43.600 58.900-54.700 94.600-1.700 5.400.6 11.200 5.500 14L67.300 221c-4.300 23.200-4.300 47 0 70.200l-42.600 24.600c-4.900 2.800-7.100 8.600-5.500 14 11.100 35.600 30 67.800 54.700 94.600 3.800 4.100 10 5.100 14.800 2.300l42.600-24.600c17.900 15.400 38.500 27.300 60.800 35.100v49.200c0 5.600 3.900 10.500 9.400 11.700 36.700 8.200 74.300 7.800 109.200 0 5.500-1.200 9.400-6.100 9.400-11.700v-49.200c22.200-7.900 42.800-19.800 60.800-35.100l42.600 24.600c4.900 2.800 11 1.900 14.800-2.300 24.700-26.700 43.600-58.900 54.700-94.600 1.500-5.500-.7-11.300-5.600-14.100zM256 336c-44.100 0-80-35.900-80-80s35.900-80 80-80 80 35.900 80 80-35.900 80-80 80z"/></svg><span style="left:41.8px;font-size:16.3px;letter-spacing:-0.348px;">Site Settings</span></div>
</div>
<div id="sideimg"><svg class="abs" style="left:0;top:0" width="250" height="225" viewBox="0 503 250 225"><circle cx="50" cy="722.700" r="130" fill="#fff"/><circle cx="167" cy="666.600" r="108.200" fill="#fff"/><rect x="0" y="640" width="250" height="90" fill="#fff"/><rect x="144.700" y="675.300" width="51.600" height="53" fill="#17499f"/><rect x="115.900" y="700" width="109.800" height="28" fill="#17499f"/></svg></div>
<div class="card" id="formcard" style="left:289px;top:168px;width:325px;height:365px">
<div class="card-h"></div>
<div class="cell" style="left:20px;top:12px;font-size:16.5px;letter-spacing:0.23px;color:#3a3f44">Airport's Form</div>
<div class="cell" style="left:20px;top:69px;font-size:16.5px;letter-spacing:0.527px;color:#3a3f44">Airport</div>
<div class="ta" style="left:20px;top:101px"><svg width="12" height="12" viewBox="0 0 12 12"><path d="M11 2.500L2.500 11M11 7.500L7.500 11" stroke="#555" stroke-width="1" fill="none"/></svg></div>
<div class="cell" style="left:20px;top:179px;font-size:16.5px;letter-spacing:0.064px;color:#3a3f44">Location</div>
<div class="ta" style="left:20px;top:211px"><svg width="12" height="12" viewBox="0 0 12 12"><path d="M11 2.500L2.500 11M11 7.500L7.500 11" stroke="#555" stroke-width="1" fill="none"/></svg></div>
<div class="card-f"></div>
<div class="btn b-blue" style="left:91px;top:322px;width:71px;font-size:14.3px;letter-spacing:-0.398px;">Save</div>
<div class="cell" style="left:181px;top:326px;font-size:14.3px;letter-spacing:-0.169px;line-height:24px;color:#212529">Cancel</div>
</div>
<div class="card" id="tablecard" style="left:646px;top:168px;width:681px;height:542px">
<div class="abs" style="left:20px;top:20px;width:641px;height:486px;border:1px solid #dddfe2"></div>
<div class="abs" style="left:21px;top:332px;width:639px;height:86px;background:#ececec"></div>
<div class="abs" style="left:55px;top:21px;width:1px;height:484px;background:#dddfe2"></div>
<div class="abs" style="left:417px;top:21px;width:1px;height:484px;background:#dddfe2"></div>
<div class="abs" style="left:539px;top:21px;width:1px;height:484px;background:#dddfe2"></div>
<div class="abs" style="left:21px;top:69px;width:639px;height:2px;background:#dddfe2"></div>
<div class="abs" style="left:21px;top:157px;width:639px;height:1px;background:#dddfe2"></div>
<div class="abs" style="left:21px;top:244px;width:639px;height:1px;background:#dddfe2"></div>
<div class="abs" style="left:21px;top:331px;width:639px;height:1px;background:#dddfe2"></div>
<div class="abs" style="left:21px;top:418px;width:639px;height:1px;background:#dddfe2"></div>
<div class="cell b" style="left:33.5px;top:33px;font-size:16.5px;letter-spacing:0.412px;">#</div>
<div class="cell b" style="left:208.5px;top:33px;font-size:16.5px;letter-spacing:0.214px;">Airport</div>
<div class="cell b" style="left:439.70000000000005px;top:33px;font-size:16.5px;letter-spacing:-0.125px;">Locoation</div>
<div class="cell b" style="left:574.0999999999999px;top:33px;font-size:16.5px;letter-spacing:-0.057px;">Action</div>
<div class="cell" style="left:34px;top:102px;font-size:16.5px;color:#2b2f33">1</div>
<div class="cell b" style="left:68px;top:90px;font-size:16.5px;letter-spacing:-0.057px;">Netaji Subhash Chandra Bose</div>
<div class="cell b" style="left:68px;top:114px;font-size:16.5px;letter-spacing:0.41px;">International Airport</div>
<div class="cell b" style="left:430.5px;top:102px;font-size:16.5px;letter-spacing:0.07px;">Kolkata</div>
<div class="btn b-blue" style="left:578px;top:83px;width:43px;line-height:33px;font-size:14.3px;letter-spacing:-0.085px;">Edit</div>
<div class="btn b-red" style="left:570px;top:114px;width:60px;line-height:33px;font-size:14.3px;letter-spacing:-0.005px;">Delete</div>
<div class="cell" style="left:34px;top:189px;font-size:16.5px;color:#2b2f33">2</div>
<div class="cell b" style="left:68px;top:177px;font-size:16.5px;letter-spacing:0.262px;">Sardar Vallabh Bhai Patel International</div>
<div class="cell b" style="left:68px;top:201px;font-size:16.5px;letter-spacing:0.286px;">Airport</div>
<div class="cell b" style="left:430.5px;top:189px;font-size:16.5px;letter-spacing:0.118px;">Ahmedabad</div>
<div class="btn b-blue" style="left:578px;top:170px;width:43px;line-height:33px;font-size:14.3px;letter-spacing:-0.085px;">Edit</div>
<div class="btn b-red" style="left:570px;top:201px;width:60px;line-height:33px;font-size:14.3px;letter-spacing:-0.005px;">Delete</div>
<div class="cell" style="left:34px;top:276px;font-size:16.5px;color:#2b2f33">3</div>
<div class="abs" style="left:68px;top:276px;width:239px;height:24px;background:#3390ff"></div>
<div class="cell b" style="left:68px;top:276px;font-size:16.5px;letter-spacing:0.299px;color:#fff">Srinagar International Airport</div>
<div class="cell b" style="left:430.5px;top:276px;font-size:16.5px;letter-spacing:-0.057px;">Srinagar</div>
<div class="btn b-blue" style="left:578px;top:257px;width:43px;line-height:33px;font-size:14.3px;letter-spacing:-0.085px;">Edit</div>
<div class="btn b-red" style="left:570px;top:288px;width:60px;line-height:33px;font-size:14.3px;letter-spacing:-0.005px;">Delete</div>
<div class="cell" style="left:34px;top:363px;font-size:16.5px;color:#2b2f33">4</div>
<div class="cell b" style="left:68px;top:363px;font-size:16.5px;letter-spacing:0.354px;">Indira Gandhi International Airport</div>
<div class="cell b" style="left:430.5px;top:363px;font-size:16.5px;letter-spacing:0.131px;">Delhi</div>
<div class="btn b-blue" style="left:578px;top:344px;width:43px;line-height:33px;font-size:14.3px;letter-spacing:-0.085px;">Edit</div>
<div class="btn b-red" style="left:570px;top:375px;width:60px;line-height:33px;font-size:14.3px;letter-spacing:-0.005px;">Delete</div>
<div class="cell" style="left:34px;top:450px;font-size:16.5px;color:#2b2f33">5</div>
<div class="cell b" style="left:68px;top:450px;font-size:16.5px;letter-spacing:0.343px;">Chattrapati Shivaji International Airport</div>
<div class="cell b" style="left:430.5px;top:450px;font-size:16.5px;letter-spacing:0.526px;">Mumbai</div>
<div class="btn b-blue" style="left:578px;top:431px;width:43px;line-height:33px;font-size:14.3px;letter-spacing:-0.085px;">Edit</div>
<div class="btn b-red" style="left:570px;top:462px;width:60px;line-height:33px;font-size:14.3px;letter-spacing:-0.005px;">Delete</div>
</div>
<!--ENDPAGE-->
<!-- mouse cursors -->
<svg class="abs" style="left:630px;top:415px" width="20" height="26" viewBox="630 415 20 26"><path d="M634.500 419.300V435.600L638.300 432.200L640.900 437.700L643.300 436.600L640.800 431.200L645.900 431Z" fill="#fff" stroke="#14141e" stroke-width="1.100" stroke-linejoin="round"/></svg>
<svg class="abs" style="left:716px;top:532px" width="10" height="18" viewBox="0 0 10 18"><path d="M2.500 1.500H4.500M5.500 1.500H7.500M5 1.500V16.500M2.500 16.500H4.500M5.500 16.500H7.500" stroke="#222" stroke-width="1" fill="none"/></svg>
<!-- player overlay -->
<div id="vlc">
<div class="abs vt" style="left:12px;top:8px">00:57</div>
<div class="abs" style="left:58px;top:11px;width:688px;height:8px;border-radius:4px;background:linear-gradient(#cfcfcf,#dcdcdc)"></div>
<div class="abs" style="left:58px;top:11px;width:82px;height:8px;border-radius:4px;background:#4a90d9"></div>
<div class="abs" style="left:132px;top:7px;width:14px;height:14px;border-radius:7px;background:linear-gradient(#f2f2f2,#c4c4c4);border:1px solid #9a9a9a"></div>
<div class="abs vt" style="left:761px;top:8px">07:59</div>
<div class="abs vb" style="left:5px;top:31px;width:30px;height:20px"><span class="abs" style="left:7px;top:6px;width:5px;height:12px;background:#8c8c8c"></span><span class="abs" style="left:17px;top:6px;width:5px;height:12px;background:#8c8c8c"></span></div>
<div class="abs vb" style="left:55px;top:34px;width:24px;height:20px"><svg class="abs" style="left:4px;top:4px" width="16" height="10" viewBox="0 0 16 10"><path d="M2 0V10M3 5L9 0V10ZM9 5L15 0V10Z" fill="#909090" stroke="#909090" stroke-width="1"/></svg></div>
<div class="abs vb" style="left:87px;top:34px;width:24px;height:20px"><span class="abs" style="left:7px;top:6px;width:9px;height:9px;background:#909090"></span></div>
<div class="abs vb" style="left:119px;top:34px;width:24px;height:20px"><svg class="abs" style="left:4px;top:4px" width="16" height="10" viewBox="0 0 16 10"><path d="M14 0V10M13 5L7 0V10ZM7 5L1 0V10Z" fill="#909090" stroke="#909090" stroke-width="1"/></svg></div>
<div class="abs vb" style="left:193px;top:34px;width:24px;height:20px"><svg class="abs" style="left:5px;top:3px" width="14" height="12" viewBox="0 0 14 12"><path d="M5 0V5H0M9 0V5H14" fill="none" stroke="#8c8c8c" stroke-width="2"/></svg></div>
<div class="abs vb" style="left:584px;top:34px;width:24px;height:20px"><svg class="abs" style="left:4px;top:5px" width="16" height="8" viewBox="0 0 16 8"><path d="M1 4H15M4 1L1 4L4 7M12 1L15 4L12 7" fill="none" stroke="#999" stroke-width="1.200"/></svg></div>
<div class="abs" style="left:645px;top:37px;font-size:9px;line-height:10px;color:#8a8a8a">40%</div>
<svg class="abs" style="left:680px;top:37.500px" width="34" height="10" viewBox="0 0 34 10"><path d="M0.500 7L30 1V10" fill="none" stroke="#7a7a7a" stroke-width="1.200"/></svg>
<div class="abs vt" style="left:728px;top:39.500px;font-size:11.500px">00:57/07:59</div>
</div>
<div class="abs" style="left:242px;top:718px;width:3px;height:10px;background:linear-gradient(90deg,#e9edf8,#b3c1ea)"></div>
<!-- recorder pause button -->
<div class="abs" style="left:1329px;top:691px;width:32px;height:32px;background:#333"><span class="abs" style="left:9px;top:10px;width:5px;height:14px;background:#bdbdbd"></span><span class="abs" style="left:18px;top:10px;width:5px;height:14px;background:#bdbdbd"></span></div>
</body>
</html>
